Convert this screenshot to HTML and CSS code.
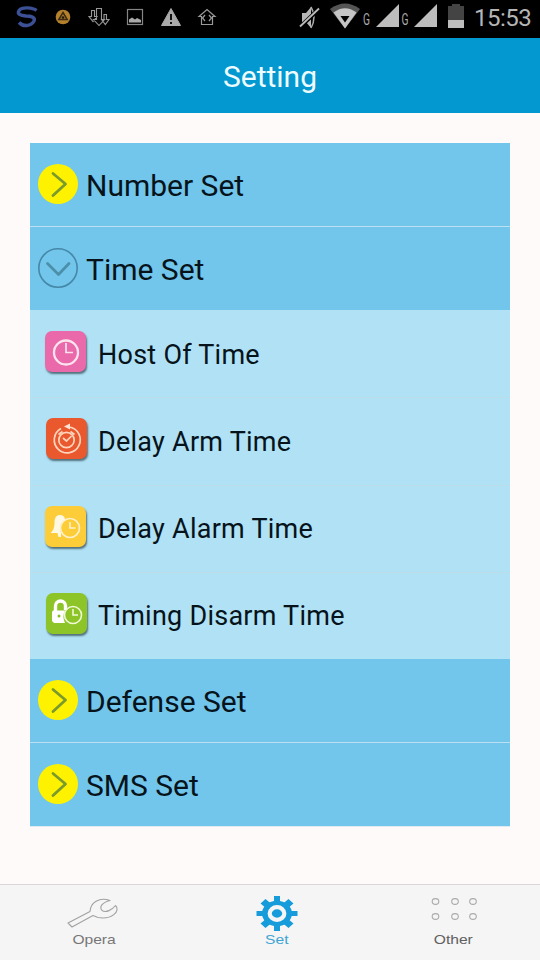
FILE: index.html
```
<!DOCTYPE html>
<html lang="en">
<head>
<meta charset="utf-8">
<title>Setting</title>
<link rel="stylesheet" href="styles.css">
</head>
<body>
<svg width="0" height="0" class="defs">
  <symbol id="closed" viewBox="0 0 40 40"><circle cx="20" cy="20" r="20" fill="#fff200"/><path d="M15 9.500L27.500 20L15 31.500" fill="none" stroke="#7a9a2c" stroke-width="2.800" stroke-linecap="round" stroke-linejoin="round"/></symbol>
  <symbol id="open" viewBox="0 0 40 40"><circle cx="20" cy="20" r="19.200" fill="none" stroke="#4588a8" stroke-width="1.600"/><path d="M9.500 15.500L20.500 26.500L31 15.500" fill="none" stroke="#4b8fa9" stroke-width="2.700" stroke-linecap="round" stroke-linejoin="round"/></symbol>
</svg>
<div class="status">
  <svg class="notices" width="230" height="38" viewBox="0 0 230 38">
    <path d="M36.500 10.500C33 7.500 22 6.500 19 10.500C17 14 20 15.500 26 16C32 16 35.500 17.500 34 21C31 26.500 23 27 19 22.500" fill="none" stroke="#3c5096" stroke-width="3.400"/>
    <circle cx="63" cy="17" r="7.300" fill="#b5802d"/><path d="M63 12.500L67.200 19.500H58.800Z" fill="none" stroke="#3b2b14" stroke-width="1.500"/><circle cx="63" cy="17.500" r="1.300" fill="#201808"/>
    <g fill="#050505" stroke="#989898" stroke-width="1.100"><path d="M91.500 10.500h3v6h2.500l-4 5l-4-5h2.500zM104 14.500h2.500v5h2.500l-3.700 5l-3.700-5h2.400zM96.500 8.500h5v11h3l-5.500 6l-5.500-6h3z"/></g>
    <rect x="127.500" y="9.500" width="15" height="15" fill="none" stroke="#858585" stroke-width="1.200"/><path d="M129 22.500v-3l3-2 3 2 2-1.500 4 2v2.500z" fill="#aaa"/>
    <path d="M171 8.500L180.500 25.500H161.500Z" fill="#aaa" stroke="#aaa" stroke-linejoin="round"/><path d="M171 14v6M171 22v2" stroke="#111" stroke-width="2"/>
    <path d="M199 16.500L207 9.500L215 16.500H212.500V24.500H201.500V16.500Z M205 15L202.500 18L205 21M209 15L211.500 18L209 21" fill="none" stroke="#9a9a9a" stroke-width="1.200"/>
  </svg>
  <svg class="signals" width="178" height="38" viewBox="290 0 178 38">
    <path d="M302 13h4l5-6v21l-5-6h-4z" fill="#b5b5b5"/><path d="M311 7q6 10 0 21" fill="none" stroke="#aaa" stroke-width="1.500"/><path d="M300 27L319 9" stroke="#000" stroke-width="4"/><path d="M300 26.500L319 8.500" stroke="#bbb" stroke-width="1.800"/>
    <path d="M330 9Q345 -2 360 9L345 28.500Z" fill="#555"/><path d="M333.500 12.500Q345 4 356.500 12.500L345 28.500Z" fill="#c5c5c5"/><path d="M340.500 16h9L345 22.500Z" fill="#000"/>
    <path d="M376 27L399 4V27ZM414 27L437 4V27Z" fill="#bdbdbd"/>
    <path d="M448 6h4V4h8v2h4v14h-16z" fill="#444"/><path d="M448 20h16v8h-16z" fill="#bdbdbd"/>
    <g class="network"><text x="363" y="25" textLength="7" lengthAdjust="spacingAndGlyphs">G</text><text x="401.500" y="25" textLength="7" lengthAdjust="spacingAndGlyphs">G</text></g>
  </svg>
  <span class="clock">15:53</span>
</div>
<header class="header">Setting</header>
<main class="list">
  <div class="group"><svg class="arrow"><use href="#closed"/></svg><span>Number Set</span></div>
  <div class="group unfolded"><svg class="arrow"><use href="#open"/></svg><span>Time Set</span></div>
  <div class="item"><svg class="tile pink" viewBox="0 0 41 41"><g fill="none" stroke="#fce4ef"><circle cx="21" cy="21.500" r="12" stroke-width="2.300"/><path d="M21 12v9.500h7" stroke-width="1.700"/></g></svg><span>Host Of Time</span></div>
  <div class="item odd"><svg class="tile orange" viewBox="0 0 41 41"><g fill="none" stroke="#ffd4bc" stroke-width="1.700"><path d="M15 10.500A13 13 0 1 0 23 9"/><circle cx="20.500" cy="22" r="7.700"/><path d="M17 20l3.500 3 5-5M12.500 16.500l4-3M28.500 16.500l-4-3"/></g><path d="M18 8.500l6-3v6z" fill="#ffe3d5"/></svg><span>Delay Arm Time</span></div>
  <div class="item"><svg class="tile yellow" viewBox="0 0 41 41"><path d="M5.500 27q4-3 4-10q0-8 5-8q5.500 0 5.500 5q-7 4-4 13v4h-2.500l-1-4z" fill="#fff9e3"/><g fill="none" stroke="#fff0c5" stroke-width="1.700"><circle cx="25" cy="22" r="9.500"/><path d="M25 16v6h5.500"/></g></svg><span>Delay Alarm Time</span></div>
  <div class="item odd"><svg class="tile green" viewBox="0 0 41 41"><path d="M9.500 18v-5a5 5 0 0 1 10 0v4" fill="none" stroke="#fff" stroke-width="3.400"/><path d="M7 17.500h12q-3 6 0 12.500H8l-2-2v-9z" fill="#fff"/><circle cx="13" cy="23" r="1.500" fill="#8abb24"/><g fill="none" stroke="#eff8d7" stroke-width="1.600"><circle cx="27" cy="22" r="8.500"/><path d="M27 16v6h5"/></g></svg><span>Timing Disarm Time</span></div>
  <div class="group"><svg class="arrow"><use href="#closed"/></svg><span>Defense Set</span></div>
  <div class="group"><svg class="arrow"><use href="#closed"/></svg><span>SMS Set</span></div>
</main>
<nav class="tabs">
  <div class="tab opera"><svg width="60" height="36" viewBox="0 0 60 36"><path d="M4 28L26 16.500C26.500 8 35 1.500 46 5.500C38 7.500 35 12 38 15.500C42 18 48 15 51.500 10.500C57 15.500 48 25 34 22.500L29 20.500L8 32Z" fill="none" stroke="#a2a2a2" stroke-width="1.100" stroke-linejoin="round"/></svg><span>Opera</span></div>
  <div class="tab set"><svg width="44" height="36" viewBox="0 0 44 36"><g fill="#179cdb"><ellipse cx="22" cy="18.500" rx="15" ry="12.800"/><path d="M19 1h6v7h-6zM19 29h6v7h-6zM1.500 16h7v5h-7zM35.500 16h7v5h-7zM5.500 8.500l5-4.500 6 5-5 4.500zM38.500 8.500l-5-4.500-6 5 5 4.500zM5.500 28.500l5 4.500 6-5-5-4.500zM38.500 28.500l-5 4.500-6-5 5-4.500z"/></g><ellipse cx="22" cy="18.500" rx="7.300" ry="6.300" fill="#179cdb" stroke="#f5f5f5" stroke-width="4.200"/></svg><span>Set</span></div>
  <div class="tab other"><svg width="50" height="36" viewBox="0 0 50 36"><g fill="none" stroke="#aaa" stroke-width="1.100"><ellipse cx="6.500" cy="6.500" rx="3.300" ry="2.900"/><ellipse cx="26" cy="6.500" rx="3.300" ry="2.900"/><ellipse cx="44" cy="6.500" rx="3.300" ry="2.900"/><ellipse cx="6.500" cy="21.500" rx="3.300" ry="2.900"/><ellipse cx="26" cy="21.500" rx="3.300" ry="2.900"/><ellipse cx="44" cy="21.500" rx="3.300" ry="2.900"/></g></svg><span>Other</span></div>
</nav>
</body>
</html>
```
FILE: styles.css
```
* { box-sizing: border-box; }
body {
  margin: 0;
  width: 540px;
  height: 960px;
  display: flex;
  flex-direction: column;
  overflow: hidden;
  background: #fdfaf9;
  font-family: Roboto, sans-serif;
  color: #06131a;
}
svg { display: block; flex: none; }
.defs { display: none; }
.status {
  height: 38px;
  flex: none;
  display: flex;
  background: #000;
}
.signals { margin-left: 60px; }
.network { fill: #aaa; font-size: 16px; }
.clock {
  margin-left: 6px;
  color: #b5b5b5;
  font-size: 24px;
  letter-spacing: -0.500px;
  line-height: 36px;
  white-space: nowrap;
}
.header {
  height: 75px;
  flex: none;
  background: #0398cf;
  color: #effcff;
  text-align: center;
  font-size: 30px;
  line-height: 77px;
}
.list {
  margin: 30px 30px 0;
  border-bottom: 1px solid #dfeaf2;
}
.group {
  height: 84px;
  display: flex;
  align-items: center;
  padding-left: 8px;
  gap: 8px;
  background: #72c5eb;
  border-bottom: 1px solid #bcdff2;
  font-size: 30px;
}
.group:last-child, .unfolded { height: 83px; border-bottom: 0; }
.arrow { width: 40px; height: 40px; margin-bottom: 2px; }
.group span { padding-top: 2px; white-space: nowrap; }
.item {
  height: 87.250px;
  display: flex;
  align-items: center;
  padding-left: 15px;
  gap: 12px;
  background: #b0e1f5;
  border-top: 1px solid #bbdce9;
  font-size: 27px;
  letter-spacing: 0.250px;
}
.unfolded + .item { border-top-color: #b0e1f5; }
.item.odd { padding-left: 16px; gap: 11px; }
.item span { padding-top: 1px; white-space: nowrap; }
.tile {
  width: 41px;
  height: 41px;
  margin-bottom: 5px;
  border-radius: 7px;
  box-shadow: 1px 2px 2px #52717c;
}
.pink { background: #e969aa; }
.orange { background: #ea582d; }
.yellow { background: #fccc39; }
.green { background: #8dc428; }
.tabs {
  height: 76px;
  margin-top: auto;
  flex: none;
  display: flex;
  justify-content: space-between;
  padding: 10px 61px 0 64px;
  background: #f5f5f5;
  border-top: 1px solid #ddd5d7;
}
.tab {
  width: 60px;
  display: flex;
  flex-direction: column;
  align-items: center;
  font: 13px/17px "Liberation Sans", sans-serif;
  color: #777;
}
.tab span { transform: scaleX(1.2); }
.tab.set { color: #41a5d3; }
.tab.other { width: 50px; color: #606060; }
.tab.other span { margin-right: 2px; }
```
